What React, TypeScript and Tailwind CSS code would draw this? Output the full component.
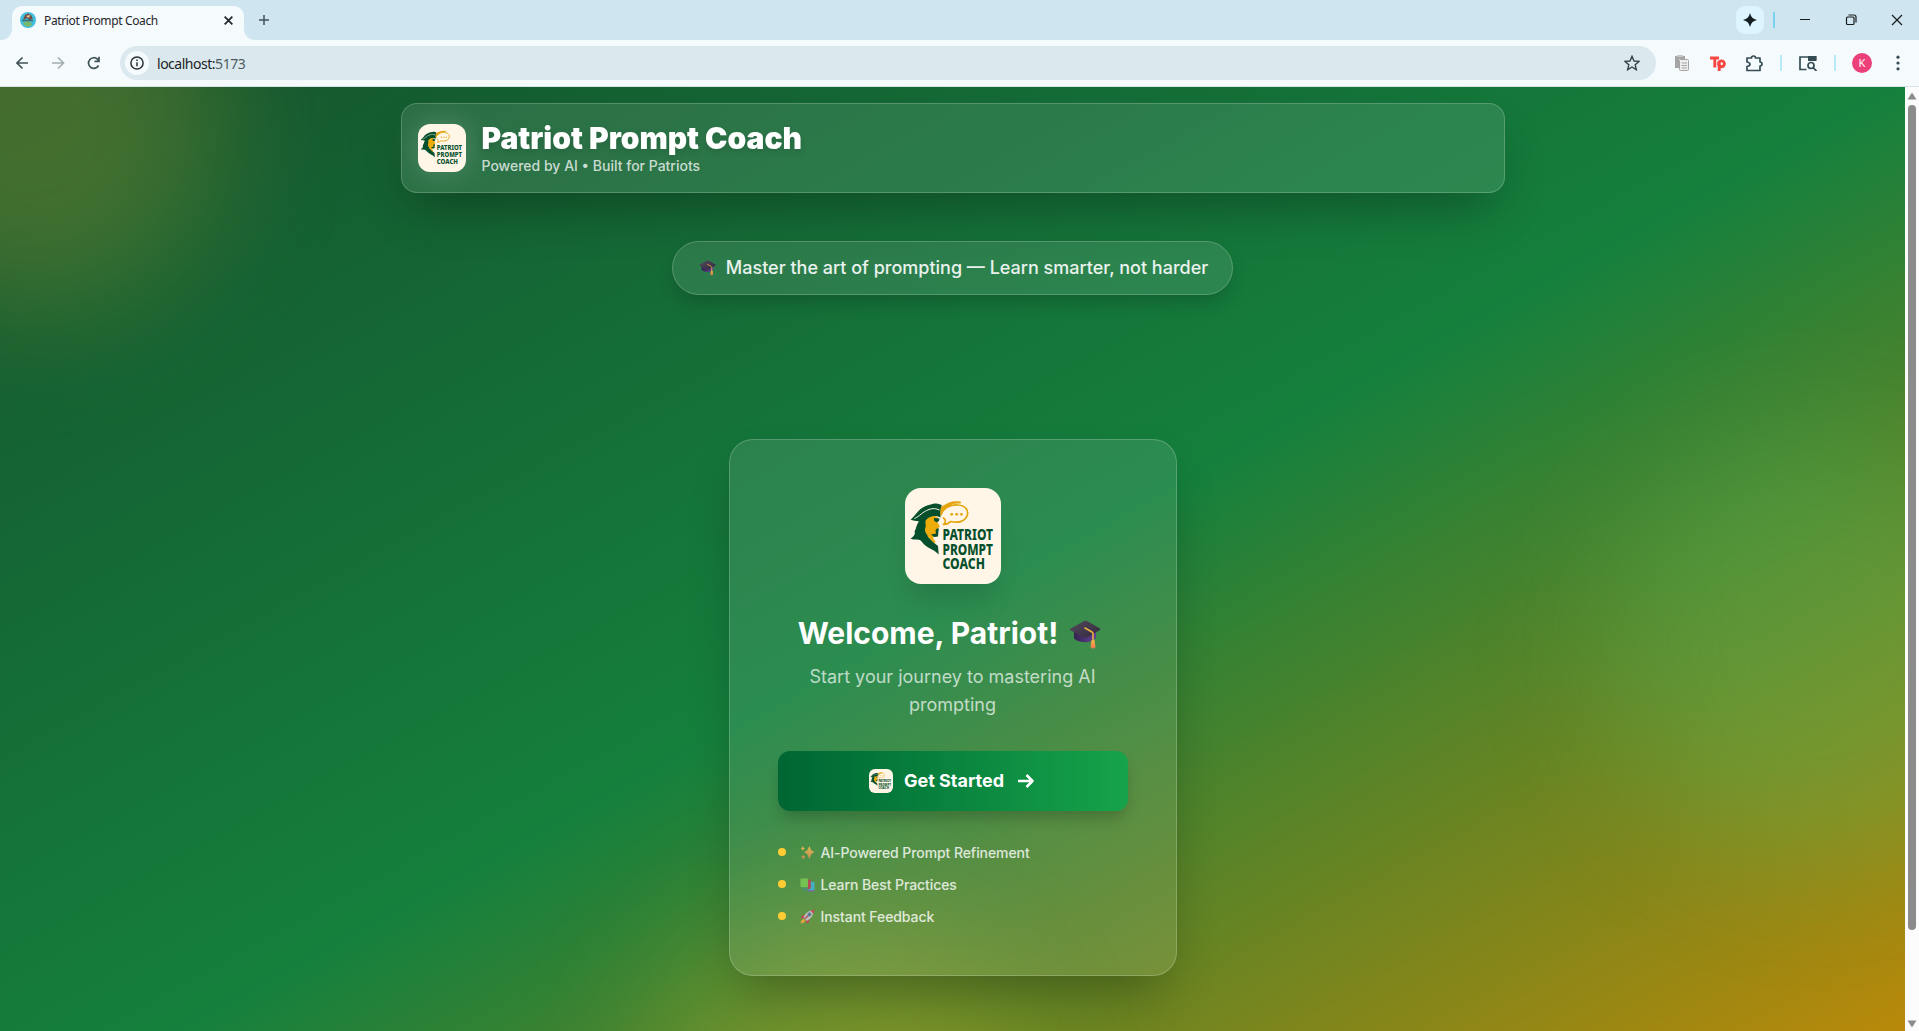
import React from "react";

function Logo({ className }: { className: string }) {
  return (
    <svg viewBox="0 0 96 96" className={className} aria-hidden="true">
      <rect width="96" height="96" fill="#fff6e8" />
      <g fill="none" stroke="#e5a50c" strokeWidth="1.700" strokeLinejoin="round" strokeLinecap="round">
        <path d="M36 27C38 20 45 16.500 53 17C61 17.500 64 23 62 28C60 33 54 35.500 46 33.500C43.500 35.500 41 36.500 38.500 36.500C41 34 41 31.500 38.500 30" />
        <path d="M36 22C41 16 46 14 55 14.500" strokeWidth="2.200" />
      </g>
      <path d="M35 20C39 16 45 14 51 14.500C45 16.500 39 21 35.500 28Z" fill="#e5a50c" />
      <g fill="#e5a50c"><circle cx="46.700" cy="26.300" r="1.400" /><circle cx="51.700" cy="26.300" r="1.400" /><circle cx="56.500" cy="26.300" r="1.400" /></g>
      <path d="M19 30L28 27L33.500 30L32.500 34L34.800 38.500L33 40.500L32.500 48L28 49L29.500 56L18 44Z" fill="#eeac0b" />
      <path d="M5.500 31.500C10 28.500 12 23 17 20C22 17 28 15.500 31 15.500C34 15.500 35.500 16.500 37 17.500C35 20 35 24 35.500 29.500C30 27 25 28 21.500 31.500C19 34 22 37 20 41C20 46 22 45 23 49L28 54L33 58L33.700 66.500C29 61 21 60 17 54C14.500 50 10 53 5.500 50.500C9.500 48 10.500 46 9.500 43C11.500 41 11 37 14 33.500C11 32.500 8 33 5.500 31.500Z" fill="#064f2d" />
      <path d="M9.500 30.500C15 28 17 24 24 21.500C28 20 31 20.500 34.500 22" fill="none" stroke="#fff6e8" strokeWidth="1" />
      <path d="M29 30L34.500 30.500L34 33L31.500 34.500L29 32.500Z M32 40.500L34 40.500L33.500 43L33 48.500L29 49L26 46.500L31 45.500L30.500 42Z" fill="#064f2d" />
      <path d="M22.500 45L30 54.500" stroke="#eeac0b" strokeWidth="2" />
      <g fill="#064f2d" fontFamily='"Noto Sans", sans-serif' fontWeight="800" fontSize="15.400">
        <text x="37.500" y="52" textLength="50.500" lengthAdjust="spacingAndGlyphs">PATRIOT</text>
        <text x="37.500" y="66.500" textLength="50.500" lengthAdjust="spacingAndGlyphs">PROMPT</text>
        <text x="37.500" y="80.700" textLength="42.500" lengthAdjust="spacingAndGlyphs">COACH</text>
      </g>
    </svg>
  );
}

function GradCap({ className }: { className: string }) {
  return (
    <svg viewBox="0 0 32 32" className={className} aria-hidden="true">
      <defs>
        <linearGradient id="capTop" x1="0" y1="0" x2="1" y2="1"><stop stopColor="#55495c" /><stop offset="1" stopColor="#302a3c" /></linearGradient>
        <linearGradient id="capBase"><stop stopColor="#35234e" /><stop offset="1" stopColor="#62409a" /></linearGradient>
        <linearGradient id="tassel" x1="0" y1="0" x2="0" y2="1"><stop stopColor="#f2b645" /><stop offset="1" stopColor="#f2774f" /></linearGradient>
      </defs>
      <path d="M5 13V20C8 25 21 26 27 20V12Z" fill="url(#capBase)" />
      <path d="M1 11L15 3C16 2.500 17 2.500 18 3L31 10.500C31.500 11 31.500 11.500 31 12L19 19C17 20 16 20 14 19L1 12Z" fill="url(#capTop)" />
      <path d="M16 10L23 14Q24 14.500 24 16V25" fill="none" stroke="#eeb044" strokeWidth="1.600" strokeLinecap="round" />
      <path d="M22.500 22H25.500L26.500 29Q24 32 21.500 29Z" fill="url(#tassel)" />
    </svg>
  );
}

function Sparkles() {
  return (
    <svg viewBox="0 0 16 16" className="size-[15px]" aria-hidden="true">
      <defs><linearGradient id="spark" x1="0" y1="0" x2="0" y2="1"><stop stopColor="#f3bf4d" /><stop offset="1" stopColor="#dd8c5d" /></linearGradient></defs>
      <path d="M10 1L12 5.700L15.500 7.500L12 9.800L10 15L7.700 9.800L4.500 7.500L7.700 5.700Z M3 1L3.900 3L5.500 3.700L3.900 4.500L3 6.500L2.100 4.500L.5 3.700L2.100 3Z M3.500 10L4.400 12L6 12.700L4.400 13.500L3.500 15.500L2.600 13.500L1 12.700L2.600 12Z" fill="url(#spark)" />
    </svg>
  );
}

function Books() {
  return (
    <svg viewBox="0 0 16 16" className="size-[15px]" aria-hidden="true">
      <path d="M11 5H15.500V15H9Z" fill="#45b2d4" /><path d="M9 14H15.500V15.500H8Z" fill="#8159b5" />
      <path d="M7 3H11.500V12L7 14Z" fill="#c53a5c" /><path d="M3 12H8L10 14H3Z" fill="#4d8f91" />
      <path d="M.5 1.500H8.500V11.500H1.500L.5 10.500Z" fill="#7bca55" /><path d="M1 11.500H8.500" stroke="#3e9357" />
    </svg>
  );
}

function Rocket() {
  return (
    <svg viewBox="0 0 16 16" className="size-[15px]" aria-hidden="true">
      <path d="M5 5.500L1.500 8L1 10.500L5 9Z M10 10L9.500 14L7 15.500L6 12Z" fill="#d43c5b" />
      <path d="M1.500 12L4 10.500L6 12L4 15L.5 15.500Z" fill="#f3a73d" />
      <path d="M4 9C5 5 9 1.500 14.500 1C14.500 7 11 11 7 12.500Z" fill="#cec6d5" />
      <path d="M11 1.800L15.500.5L14.300 5Z" fill="#d93b55" /><path d="M5 10.500L9 7" stroke="#bc3458" strokeWidth="1.300" />
      <circle cx="10" cy="5.800" r="1.700" fill="#4285b0" stroke="#665c7b" strokeWidth=".6" />
    </svg>
  );
}

function TabBar() {
  return (
    <div className="flex h-10 items-stretch bg-[#cfe6f0]">
      <div className="flex w-3 items-end bg-[#f5fafd]"><div className="h-full w-full rounded-br-[11px] bg-[#cfe6f0]" /></div>
      <div className="flex w-[232px] bg-[#cfe6f0]">
        <div className="mt-1.5 flex h-[34px] w-full items-center rounded-t-[10px] bg-[#f5fafd] pb-1.5 pr-2.5 pl-2">
          <svg viewBox="0 0 16 16" className="size-4 shrink-0" aria-hidden="true">
            <circle cx="8" cy="8" r="8" fill="#43bddd" />
            <path d="M3 8L5 3L8 1.500L11 3L13 7L9 8L7 6Z" fill="#754d3e" /><path d="M6 4L10 3L9 6Z" fill="#ead1a5" />
            <path d="M3 11L7 9L11 10L12 13L8 15L4 13Z" fill="#79b96b" /><path d="M2 8.500H13" stroke="#386e7a" strokeWidth="1.500" />
          </svg>
          <span className="ml-2 flex-1 pt-px text-[12px] tracking-[-0.36px] whitespace-nowrap text-[#1f2528]">Patriot Prompt Coach</span>
          <svg viewBox="0 0 10 10" className="size-[11px]" aria-hidden="true"><path d="M1.500 1.500L8.500 8.500M8.500 1.500L1.500 8.500" stroke="#20292d" strokeWidth="1.600" /></svg>
        </div>
      </div>
      <div className="w-3 bg-[#f5fafd]"><div className="h-full rounded-bl-[11px] bg-[#cfe6f0]" /></div>
      <svg viewBox="0 0 10 10" className="mt-[15px] ml-[3px] size-[10px]" aria-hidden="true"><path d="M5 0V10M0 5H10" stroke="#3f5258" strokeWidth="1.500" /></svg>
      <div className="flex-1" />
      <div className="mt-1.5 mr-[9px] flex size-7 items-center justify-center rounded-[9px] bg-[#dcf5fe]">
        <svg viewBox="0 0 14 14" className="size-[14px]" aria-hidden="true"><path d="M7 0Q8.200 5.800 14 7Q8.200 8.200 7 14Q5.800 8.200 0 7Q5.800 5.800 7 0Z" fill="#151f22" /></svg>
      </div>
      <div className="mt-3 mr-[25px] h-4 w-0.5 bg-[#79d3f1]" />
      <svg viewBox="0 0 103 12" className="mt-[14px] mr-[16px] h-3 w-[103px]" fill="none" stroke="#171b1d" strokeWidth="1.200" aria-hidden="true">
        <path d="M0 5.500H10M92 1L102 11M102 1L92 11" />
        <rect x="46.500" y="3" width="7.500" height="7.500" rx="1" /><path d="M48.500 1H54Q56 1 56 3V8.500" />
      </svg>
    </div>
  );
}

function Toolbar() {
  return (
    <div className="flex h-[47px] items-center border-b border-[#d5e2e6] bg-[#f5fafd] pl-4">
      <svg viewBox="0 0 84 14" className="h-[14px] w-[84px]" fill="none" stroke="#40545a" strokeWidth="1.700" aria-hidden="true">
        <path d="M12 7H1.500M6.500 1.500L1 7L6.500 12.500" />
        <path d="M36 7H47M42 1.500L47.500 7L42 12.500" stroke="#a3afb3" />
        <path d="M82.500 9.500A5.300 5.300 0 1 1 81.500 3.200L83 5M83 .7V5.300H78.500" />
      </svg>
      <div className="ml-5 flex h-[34px] w-[1536px] items-center rounded-full bg-[#dbe9ee] pr-4 pl-[5px]">
        <div className="flex size-6 items-center justify-center rounded-full bg-[#f5fafd]">
          <svg viewBox="0 0 14 14" className="size-[14px]" fill="none" stroke="#263238" strokeWidth="1.500" aria-hidden="true"><circle cx="7" cy="7" r="6.100" /><path d="M7 6.200V10.300M7 3.500V5" /></svg>
        </div>
        <span className="ml-2 flex-1 text-[14px] tracking-[-0.48px] text-[#4d5c62]"><span className="text-[#1b2326]">localhost:</span>5173</span>
        <svg viewBox="0 0 16 16" className="size-4" fill="none" stroke="#3b4548" strokeWidth="1.400" aria-hidden="true"><path d="M8 1.300L10 6L15 6.400L11.200 9.700L12.300 14.700L8 12L3.700 14.700L4.800 9.700L1 6.400L6 6Z" /></svg>
      </div>
      <svg viewBox="0 0 14 16" className="ml-[19px] h-4 w-[14px]" aria-hidden="true"><path d="M0 1H10V4H4V13H0Z" fill="#a5a5a5" /><path d="M2 0H8V2H2Z" fill="#c6c6c6" /><rect x="4.500" y="4.500" width="9" height="11" rx="1" fill="#eee" stroke="#a5a5a5" /><path d="M6.500 8H12M6.500 10.500H12M6.500 13H12" stroke="#a5a5a5" /></svg>
      <svg viewBox="0 0 16 15" className="ml-[21px] h-[15px] w-4" fill="none" stroke="#f84640" strokeWidth="2.900" aria-hidden="true"><path d="M0 2H9M4.800 2V11.500M9.200 5V15" /><circle cx="11.500" cy="7.800" r="2.900" /></svg>
      <svg viewBox="0 0 17 17" className="ml-[20px] size-[17px]" fill="none" stroke="#354b54" strokeWidth="1.700" strokeLinejoin="round" aria-hidden="true"><path d="M1 3H5.500Q5.500 1 7.500 1T9.500 3H14V7Q16 7.200 16 9T14 11V15.500H1V11.500Q4 11 4 9.300T1 7Z" /></svg>
      <div className="ml-[17px] h-4 w-0.5 bg-[#b8eafb]" />
      <svg viewBox="0 0 18 15" className="ml-[17px] h-[15px] w-[18px]" fill="none" stroke="#354b54" strokeWidth="1.700" aria-hidden="true"><path d="M7.500 13.500H1V1H16.500V4" /><path d="M9 0H17.500V5H9Z" fill="#354b54" stroke="none" /><circle cx="12" cy="9.500" r="3" /><path d="M14 11.500L17.500 15" /></svg>
      <div className="ml-[17px] h-4 w-0.5 bg-[#b8eafb]" />
      <div className="ml-4 flex size-5 items-center justify-center rounded-full bg-[#ec407a] text-[11px] text-white">K</div>
      <svg viewBox="0 0 4 16" className="ml-6 h-4 w-1" fill="#354b54" aria-hidden="true"><circle cx="2" cy="2.200" r="1.600" /><circle cx="2" cy="8" r="1.600" /><circle cx="2" cy="13.800" r="1.600" /></svg>
    </div>
  );
}

function Scrollbar() {
  return (
    <div className="flex w-[14px] flex-col items-center bg-[#fcfcfc] py-[5px]">
      <svg viewBox="0 0 10 8" className="h-2 w-2.5" aria-hidden="true"><path d="M5 .5L9.500 7.500H.5Z" fill="#8b8b8b" /></svg>
      <div className="mt-[5px] h-[825px] w-2 rounded-full bg-[#8b8b8b]" />
      <div className="flex-1" />
      <svg viewBox="0 0 10 8" className="-mb-0.5 h-2 w-2.5" aria-hidden="true"><path d="M5 7.500L9.500.5H.5Z" fill="#8b8b8b" /></svg>
    </div>
  );
}

const features = [
  { icon: <Sparkles />, label: "AI-Powered Prompt Refinement" },
  { icon: <Books />, label: "Learn Best Practices" },
  { icon: <Rocket />, label: "Instant Feedback" },
];

export default function App() {
  return (
    <div className="flex h-[1031px] w-[1919px] flex-col overflow-hidden font-['Noto_Sans',sans-serif]">
      <TabBar />
      <Toolbar />
      <div className="flex min-h-0 flex-1">
        <main className="relative isolate flex w-[1905px] flex-col items-center overflow-hidden bg-[linear-gradient(to_bottom_right,#14532d,#15803d_50%,#ca8a04)] bg-size-[100%_1045px] bg-no-repeat pt-4 font-['Inter',sans-serif]">
          <div className="absolute -top-40 -left-40 -z-10 size-96 rounded-full bg-[#ffcc33]/20 blur-[64px]" />
          <div className="absolute top-[345px] -right-[130px] -z-10 size-[430px] rounded-full bg-[#4ade80]/20 blur-[64px]" />
          <div className="absolute top-[821px] left-1/3 -z-10 size-96 rounded-full bg-[#ffcc33]/20 blur-[64px]" />
          <header className="flex h-[90px] w-[1104px] items-center gap-4 rounded-2xl border border-white/20 bg-white/10 px-4 shadow-[0_25px_50px_-12px_rgba(0,0,0,0.3)]">
            <Logo className="size-12 rounded-xl shadow-[0_0_30px_rgba(255,255,255,0.2)]" />
            <div>
              <h1 className="text-[30px] leading-9 font-black text-white drop-shadow-md">Patriot Prompt Coach</h1>
              <p className="text-[14px] leading-5 font-medium text-white/75">Powered by AI • Built for Patriots</p>
            </div>
          </header>
          <div className="mt-12 flex h-[54px] w-[561px] items-center justify-center rounded-full border border-white/20 bg-white/10 pb-px pl-0.5 shadow-[0_10px_20px_-4px_rgba(0,0,0,0.2)]">
            <GradCap className="mr-2.5 size-[17px]" />
            <p className="text-[18px] font-medium whitespace-nowrap text-white/90">Master the art of prompting — Learn smarter, not harder</p>
          </div>
          <section className="mt-[144px] flex h-[537px] w-[448px] flex-col items-center rounded-3xl border border-white/20 bg-white/10 p-12 shadow-[0_25px_50px_-12px_rgba(0,0,0,0.3)]">
            <Logo className="size-24 shrink-0 rounded-2xl shadow-[0_20px_25px_-5px_rgba(0,0,0,0.12)]" />
            <div className="mt-[31px] mr-1.5 flex h-9 items-center">
              <h2 className="text-[30px] leading-9 font-bold whitespace-nowrap text-white">Welcome, Patriot!</h2>
              <GradCap className="mt-0.5 ml-[11px] size-8" />
            </div>
            <p className="mt-3 text-center text-[18px] leading-7 text-white/70">Start your journey to mastering AI prompting</p>
            <button className="mt-8 flex h-[60px] w-full shrink-0 items-center justify-center rounded-xl bg-linear-to-r from-[#006633] to-[#16a34a] pr-0.5 pb-px text-[18px] font-bold text-white shadow-[0_10px_15px_-3px_rgba(0,0,0,0.2)]">
              <Logo className="mr-[11px] size-6 rounded-md" />
              Get Started
              <svg viewBox="0 0 16 16" className="ml-3.5 size-4" fill="none" stroke="white" strokeWidth="2.500" strokeLinejoin="round" aria-hidden="true"><path d="M0 8H14M8.500 2L14.500 8L8.500 14" /></svg>
            </button>
            <ul className="mt-[31px] flex w-full flex-col gap-3">
              {features.map(({ icon, label }) => (
                <li key={label} className="flex h-5 items-center text-[14px] font-medium tracking-[-0.08px] text-white/80">
                  <span className="mr-3 size-2 rounded-full bg-[#ffcc33]" />
                  <span className="mr-[6px] ml-0.5 opacity-85">{icon}</span>
                  {label}
                </li>
              ))}
            </ul>
          </section>
        </main>
        <Scrollbar />
      </div>
    </div>
  );
}
